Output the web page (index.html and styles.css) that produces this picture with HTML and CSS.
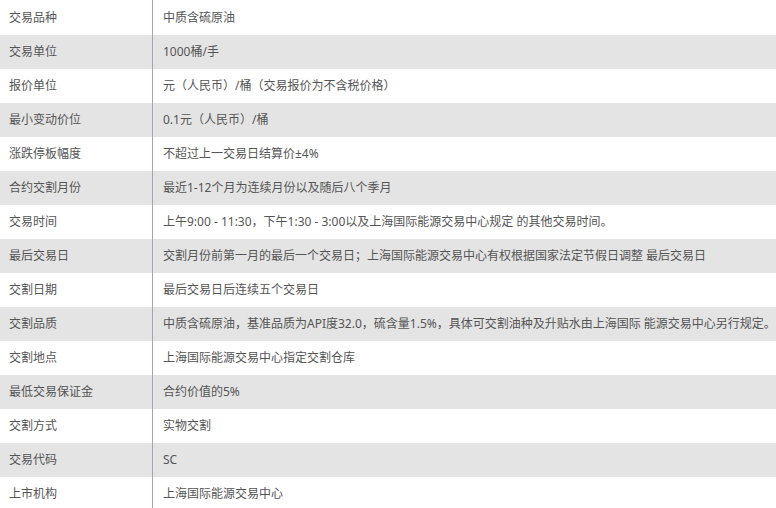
FILE: index.html
```html
<!DOCTYPE html>
<html lang="zh-CN">
<head>
<meta charset="utf-8">
<link rel="stylesheet" href="styles.css">
</head>
<body>
<table class="spec">
<tbody>
<tr><td class="k">交易品种</td><td class="v">中质含硫原油</td></tr>
<tr><td class="k">交易单位</td><td class="v">1000桶/手</td></tr>
<tr><td class="k">报价单位</td><td class="v">元（人民币）/桶（交易报价为不含税价格）</td></tr>
<tr><td class="k">最小变动价位</td><td class="v">0.1元（人民币）/桶</td></tr>
<tr><td class="k">涨跌停板幅度</td><td class="v">不超过上一交易日结算价±4%</td></tr>
<tr><td class="k">合约交割月份</td><td class="v">最近1-12个月为连续月份以及随后八个季月</td></tr>
<tr><td class="k">交易时间</td><td class="v">上午9:00 - 11:30，下午1:30 - 3:00以及上海国际能源交易中心规定 的其他交易时间。</td></tr>
<tr><td class="k">最后交易日</td><td class="v">交割月份前第一月的最后一个交易日；上海国际能源交易中心有权根据国家法定节假日调整 最后交易日</td></tr>
<tr><td class="k">交割日期</td><td class="v">最后交易日后连续五个交易日</td></tr>
<tr><td class="k">交割品质</td><td class="v">中质含硫原油，基准品质为API度32.0，硫含量1.5%，具体可交割油种及升贴水由上海国际 能源交易中心另行规定。</td></tr>
<tr><td class="k">交割地点</td><td class="v">上海国际能源交易中心指定交割仓库</td></tr>
<tr><td class="k">最低交易保证金</td><td class="v">合约价值的5%</td></tr>
<tr><td class="k">交割方式</td><td class="v">实物交割</td></tr>
<tr><td class="k">交易代码</td><td class="v">SC</td></tr>
<tr><td class="k">上市机构</td><td class="v">上海国际能源交易中心</td></tr>
</tbody>
</table>
</body>
</html>
```
FILE: styles.css
```css
html, body {
  margin: 0;
  padding: 0;
  background: #ffffff;
}
body {
  font-family: "Noto Sans", "Noto Sans CJK SC", sans-serif;
  font-size: 12px;
  color: #555555;
}
.spec {
  width: 776px;
  border-collapse: collapse;
  table-layout: fixed;
}
.spec tr {
  height: 34px;
}
.spec tr:first-child {
  height: 35px;
}
.spec tr:nth-child(even) {
  background: #e4e4e4;
}
.spec td {
  padding: 0;
  vertical-align: middle;
  white-space: nowrap;
  line-height: 16px;
}
.spec .k {
  width: 143px;
  padding-left: 9px;
  border-right: 1px solid #a4a4b4;
}
.spec .v {
  padding-left: 10px;
}
```
